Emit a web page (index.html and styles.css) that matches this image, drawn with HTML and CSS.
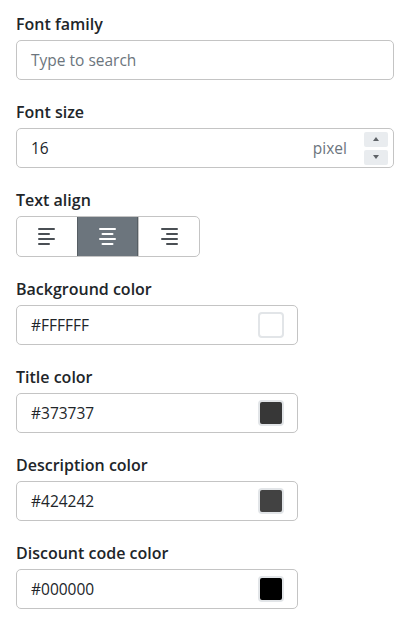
FILE: index.html
```html
<!DOCTYPE html>
<html>
<head>
<meta charset="utf-8">
<link rel="stylesheet" href="styles.css">
</head>
<body>
<div class="panel">
  <div class="group">
    <label class="lbl">Font family</label>
    <div class="field wide"><span class="ph">Type to search</span></div>
  </div>
  <div class="group">
    <label class="lbl">Font size</label>
    <div class="field wide">
      <span class="val">16</span>
      <span class="unit">pixel</span>
      <div class="spin">
        <span class="sbtn"><svg width="6" height="4" viewBox="0 0 6 4"><path d="M3 0L6 4H0Z" fill="#5f6368"/></svg></span>
        <span class="sbtn"><svg width="6" height="4" viewBox="0 0 6 4"><path d="M0 0H6L3 4Z" fill="#5f6368"/></svg></span>
      </div>
    </div>
  </div>
  <div class="group">
    <label class="lbl">Text align</label>
    <div class="btngroup">
      <span class="abtn"><svg width="17" height="17" viewBox="0 0 17 17"><rect x="0" y="0" width="17" height="2" rx="1"/><rect x="0" y="5" width="12" height="2" rx="1"/><rect x="0" y="10" width="17" height="2" rx="1"/><rect x="0" y="15" width="12" height="2" rx="1"/></svg></span>
      <span class="abtn active"><svg width="17" height="17" viewBox="0 0 17 17"><rect x="0" y="0" width="17" height="2" rx="1"/><rect x="2.5" y="5" width="12" height="2" rx="1"/><rect x="0" y="10" width="17" height="2" rx="1"/><rect x="2.5" y="15" width="12" height="2" rx="1"/></svg></span>
      <span class="abtn"><svg width="17" height="17" viewBox="0 0 17 17"><rect x="0" y="0" width="17" height="2" rx="1"/><rect x="5" y="5" width="12" height="2" rx="1"/><rect x="0" y="10" width="17" height="2" rx="1"/><rect x="5" y="15" width="12" height="2" rx="1"/></svg></span>
    </div>
  </div>
  <div class="group">
    <label class="lbl">Background color</label>
    <div class="field color"><span class="val">#FFFFFF</span><span class="sw sw-white"></span></div>
  </div>
  <div class="group">
    <label class="lbl">Title color</label>
    <div class="field color"><span class="val">#373737</span><span class="sw sw-title"></span></div>
  </div>
  <div class="group">
    <label class="lbl">Description color</label>
    <div class="field color"><span class="val">#424242</span><span class="sw sw-desc"></span></div>
  </div>
  <div class="group">
    <label class="lbl">Discount code color</label>
    <div class="field color"><span class="val">#000000</span><span class="sw sw-black"></span></div>
  </div>
</div>
</body>
</html>
```
FILE: styles.css
```css
* { box-sizing: border-box; }
html, body { margin: 0; padding: 0; background: #fff; }
body {
  font-family: "Open Sans", "Noto Sans", "Liberation Sans", sans-serif;
  color: #212529;
  font-size: 15.5px;
}
.panel {
  padding: 12px 16px 0 16px;
}
.group {
  margin-bottom: 20px;
}
.lbl {
  display: block;
  font-weight: 600;
  font-size: 16px;
  line-height: 24px;
  margin-bottom: 4px;
  color: #212529;
}
.field {
  height: 40px;
  border: 1px solid #c4c4c4;
  border-radius: 5px;
  display: flex;
  align-items: center;
  padding: 0 5px 0 14px;
  line-height: 24px;
}
.field.wide { width: 378px; }
.field.color { width: 282px; padding-right: 13px; }
.ph { color: #6c757d; flex: 1; }
.val { color: #212529; flex: 1; }
.unit { color: #6c757d; margin-right: 17px; }
.spin {
  display: flex;
  flex-direction: column;
  gap: 3px;
}
.sbtn {
  width: 24px;
  height: 15px;
  background: #e9ecef;
  border-radius: 2px;
  display: flex;
  align-items: center;
  justify-content: center;
}
.sbtn svg { display: block; }
.btngroup {
  display: flex;
  width: 184px;
  height: 41px;
  border: 1px solid #c4c4c4;
  border-radius: 5px;
  overflow: hidden;
}
.abtn {
  flex: 1;
  display: flex;
  align-items: center;
  justify-content: center;
  fill: #4a4f54;
}
.abtn + .abtn { border-left: 1px solid #c4c4c4; }
.abtn.active {
  background: #6c757d;
  fill: #ffffff;
  border: 1px solid #565e64;
  margin: -1px 0;
}
.abtn svg { display: block; }
.sw {
  width: 26px;
  height: 26px;
  border-radius: 4px;
  border: 2px solid #e2e5e8;
}
.sw-white { background: #ffffff; }
.sw-title { background: #373737; }
.sw-desc { background: #424242; }
.sw-black { background: #000000; }
```
